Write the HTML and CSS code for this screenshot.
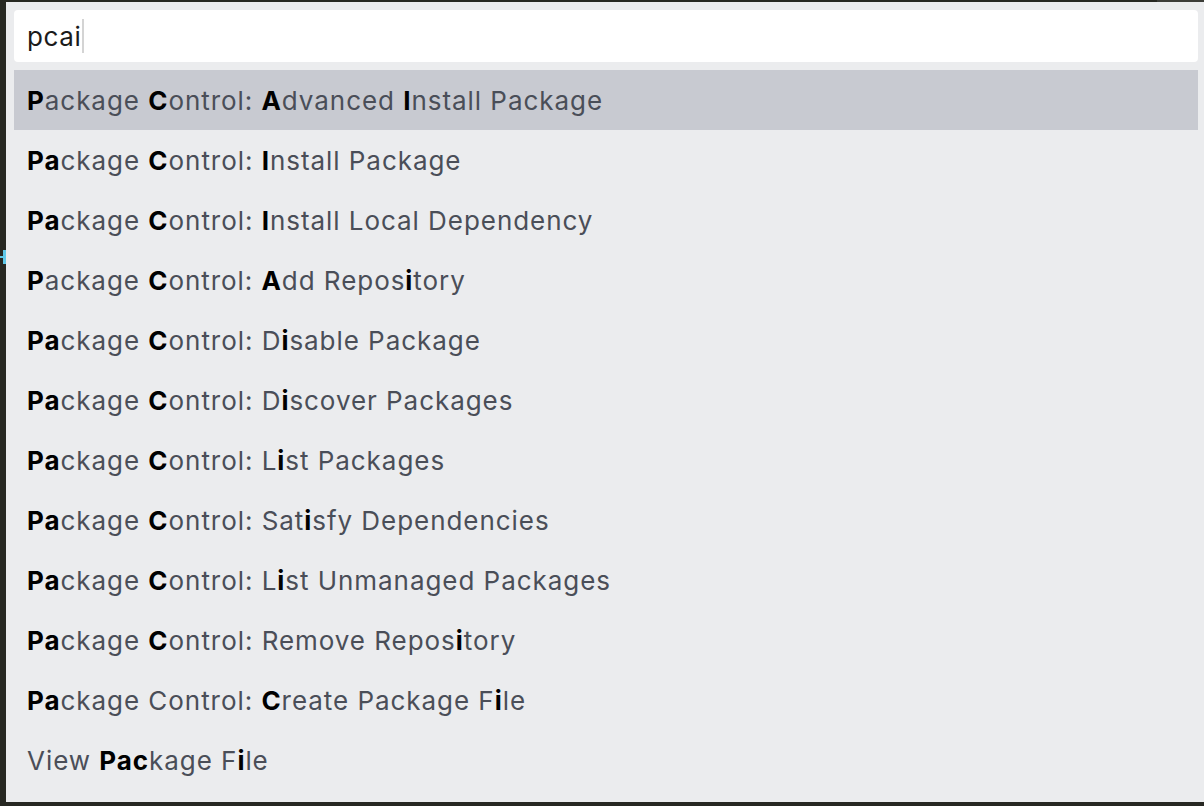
FILE: index.html
```html
<!DOCTYPE html>
<html>
<head>
<meta charset="utf-8">
<link rel="stylesheet" href="styles.css">
</head>
<body>
<div class="frame">
  <div class="topbar"><div class="topbar-tab"></div></div>
  <div class="main">
    <div class="gutter"><div class="mark"></div></div>
    <div class="panel">
      <div class="input"><span class="typed">pcai</span><span class="caret"></span></div>
      <ul class="list">
        <li class="item selected"><b>P</b>ackage <b>C</b>ontrol: <b>A</b>dvanced <b>I</b>nstall Package</li>
        <li class="item"><b>Pa</b>ckage <b>C</b>ontrol: <b>I</b>nstall Package</li>
        <li class="item"><b>Pa</b>ckage <b>C</b>ontrol: <b>I</b>nstall Local Dependency</li>
        <li class="item"><b>P</b>ackage <b>C</b>ontrol: <b>A</b>dd Repos<b>i</b>tory</li>
        <li class="item"><b>Pa</b>ckage <b>C</b>ontrol: D<b>i</b>sable Package</li>
        <li class="item"><b>Pa</b>ckage <b>C</b>ontrol: D<b>i</b>scover Packages</li>
        <li class="item"><b>Pa</b>ckage <b>C</b>ontrol: L<b>i</b>st Packages</li>
        <li class="item"><b>Pa</b>ckage <b>C</b>ontrol: Sat<b>i</b>sfy Dependencies</li>
        <li class="item"><b>Pa</b>ckage <b>C</b>ontrol: L<b>i</b>st Unmanaged Packages</li>
        <li class="item"><b>Pa</b>ckage <b>C</b>ontrol: Remove Repos<b>i</b>tory</li>
        <li class="item"><b>Pa</b>ckage Control: <b>C</b>reate Package F<b>i</b>le</li>
        <li class="item">View <b>Pac</b>kage F<b>i</b>le</li>
      </ul>
    </div>
  </div>
</div>
</body>
</html>
```

FILE: styles.css
```css
html, body {
  margin: 0;
  padding: 0;
  background: #272822;
  width: 1204px;
  height: 806px;
  overflow: hidden;
}
.frame {
  display: flex;
  flex-direction: column;
  width: 1204px;
  height: 806px;
}
.topbar {
  height: 2px;
  display: flex;
  justify-content: flex-end;
  background: #272822;
}
.topbar-tab {
  width: 47px;
  height: 2px;
  background: #3c3d38;
}
.main {
  display: flex;
  height: 800px;
}
.gutter {
  width: 6px;
  position: relative;
  background: #272822;
}
.mark {
  position: absolute;
  left: 0;
  top: 248px;
  width: 6px;
  height: 14px;
}
.mark::before {
  content: "";
  position: absolute;
  left: 3px;
  top: 0;
  width: 3px;
  height: 14px;
  background: #5fc8e8;
}
.mark::after {
  content: "";
  position: absolute;
  left: 0;
  top: 6px;
  width: 6px;
  height: 2px;
  background: #5fc8e8;
}
.panel {
  flex: 1;
  background: #ebecee;
  padding: 8px 6px 0 8px;
  display: flex;
  flex-direction: column;
  gap: 8px;
  font-family: Inter, "Noto Sans", sans-serif;
}
.input {
  height: 52px;
  background: #ffffff;
  border-radius: 4px;
  display: flex;
  align-items: center;
  padding-left: 13px;
  font-size: 26px;
  letter-spacing: 0.6px;
  color: #1b1b1b;
}
.caret {
  display: inline-block;
  width: 2px;
  height: 34px;
  margin-left: 1px;
  background: #d4d4d4;
}
.list {
  list-style: none;
  margin: 0;
  padding: 0;
}
.item {
  height: 60px;
  display: flex;
  align-items: center;
  padding-left: 13px;
  font-size: 26px;
  letter-spacing: 0.95px;
  color: #4a4e58;
  white-space: pre;
}
.item b {
  color: #000000;
  font-weight: 700;
}
.item.selected {
  background: #c8cad1;
}
```
